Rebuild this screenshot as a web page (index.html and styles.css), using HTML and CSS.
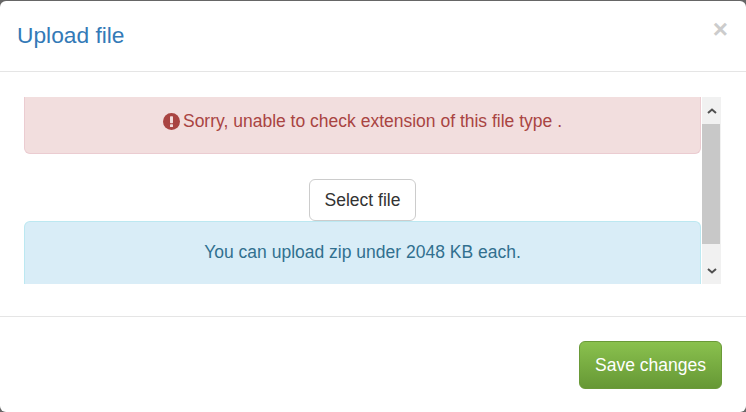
FILE: index.html
```html
<!DOCTYPE html>
<html>
<head>
    <title>Upload file</title>
    <meta name="viewport" content="width=device-width, initial-scale=1.0">
    <link rel="stylesheet" href="styles.css">
</head>
<body>
    <div class="modal">
        <div class="modal-header">
            <h4 class="modal-title">Upload file</h4>
            <span class="close">×</span>
        </div>
        <div class="modal-body">
            <div class="scroll-box">
                <div class="scroll-content">
                    <div class="alert alert-danger">
                        <svg class="icon" viewBox="0 0 16 16">
                            <circle cx="8" cy="8" r="8" fill="#a94442"/>
                            <rect x="6.6" y="3" width="2.8" height="6.6" rx="0.6" fill="#f2dede"/>
                            <rect x="6.6" y="10.6" width="2.8" height="2.6" rx="0.5" fill="#f2dede"/>
                        </svg>
                        Sorry, unable to check extension of this file type .
                    </div>
                    <div class="select-row">
                        <button class="btn">Select file</button>
                    </div>
                    <div class="alert alert-info">You can upload zip under 2048 KB each.</div>
                </div>
                <div class="scrollbar">
                    <div class="scroll-arrow">
                        <svg viewBox="0 0 10 6"><path d="M1 5 L5 1.5 L9 5" fill="none" stroke="#505050" stroke-width="2"/></svg>
                    </div>
                    <div class="scroll-thumb"></div>
                    <div class="scroll-rest"></div>
                    <div class="scroll-arrow">
                        <svg viewBox="0 0 10 6"><path d="M1 1 L5 4.5 L9 1" fill="none" stroke="#505050" stroke-width="2"/></svg>
                    </div>
                </div>
            </div>
        </div>
        <div class="modal-footer">
            <button class="btn btn-success">Save changes</button>
        </div>
    </div>
</body>
</html>
```

FILE: styles.css
```css
html, body {
    margin: 0;
    height: 100%;
    background: #666;
    overflow: hidden;
    font-family: "Liberation Sans", Arial, sans-serif;
}

body {
    padding-top: 1px;
    box-sizing: border-box;
}

.modal {
    display: flex;
    flex-direction: column;
    height: 411px;
    background: #fff;
    border-radius: 6px;
}

.modal-header {
    display: flex;
    justify-content: space-between;
    height: 70px;
    padding: 0 18px 0 17px;
    border-bottom: 1px solid #e5e5e5;
}

.modal-title {
    margin: 0;
    padding-top: 20px;
    font-size: 22.75px;
    font-weight: normal;
    line-height: 29px;
    color: #337ab7;
}

.close {
    margin: 13px 0 0 0;
    font-size: 26px;
    font-weight: bold;
    line-height: 30px;
    color: #ccc;
}

.modal-body {
    height: 245px;
    padding: 25px 25px 0 24px;
    box-sizing: border-box;
    border-bottom: 1px solid #e5e5e5;
}

.scroll-box {
    display: flex;
    height: 187px;
}

.scroll-content {
    flex: 1;
    overflow: hidden;
}

.alert {
    box-sizing: border-box;
    font-size: 17.5px;
    text-align: center;
    border-radius: 0 0 6px 6px;
}

.alert-danger {
    display: flex;
    align-items: center;
    justify-content: center;
    gap: 3px;
    height: 57px;
    padding-bottom: 8px;
    color: #a94442;
    background: #f2dede;
    border: 1px solid #ebccd1;
    border-top: 0;
}

.icon {
    width: 17px;
    height: 17px;
}

.select-row {
    display: flex;
    justify-content: center;
    padding-top: 25px;
}

.btn {
    height: 42px;
    padding: 0 15px;
    font-family: inherit;
    font-size: 17.5px;
    color: #333;
    background: #fff;
    border: 1px solid #ccc;
    border-radius: 6px;
}

.alert-info {
    height: 63px;
    padding-top: 20px;
    color: #31708f;
    background: #d9edf7;
    border: 1px solid #bce8f1;
    border-bottom: 0;
    border-radius: 6px 6px 0 0;
}

.scrollbar {
    display: flex;
    flex-direction: column;
    width: 19px;
    margin-left: 1px;
    background: #f1f1f1;
}

.scroll-arrow {
    display: flex;
    align-items: center;
    justify-content: center;
    height: 27px;
}

.scroll-arrow svg {
    width: 10px;
    height: 6px;
}

.scroll-thumb {
    height: 120px;
    margin-right: 1px;
    background: #c8c8c8;
}

.scroll-rest {
    flex: 1;
}

.modal-footer {
    display: flex;
    justify-content: flex-end;
    padding: 24px 24px 0 0;
}

.btn-success {
    width: 143px;
    height: 48px;
    color: #fff;
    background: linear-gradient(#8ac14e, #669835);
    border: 1px solid #6a9a38;
}
```
